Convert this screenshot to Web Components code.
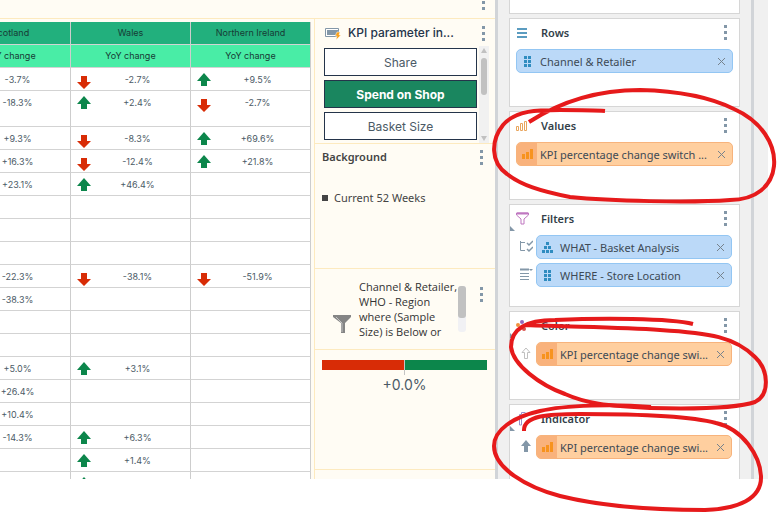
<!DOCTYPE html>
<html lang="en">
<head>
<meta charset="utf-8">
<title>Report editor</title>
<style>
    body {
        margin: 0;
        background: #fff;
        font-family: "Noto Sans", "Open Sans", sans-serif;
        font-size: 11px;
        color: #3d4a55;
    }
</style>
</head>
<body>
<report-editor></report-editor>

<script>
const ICONS = {
    rows: '<svg width="12" height="12"><path d="M1 2h10M1 6h10M1 10h10" stroke="#5b9cc0" stroke-width="2"/></svg>',
    values: '<svg width="12" height="12" fill="none" stroke="#e8a55c"><path d="M.5 6.5h2v4h-2zM4.500 3.500h2v7h-2zM8.500 1.500h2v9h-2z"/></svg>',
    filters: '<svg width="13" height="13" fill="none" stroke="#bf77c0"><path d="M.5 1v2l4.500 4v5h3V7l4.500-4V1z"/><path d="M1 1.500h11" stroke-width="2"/></svg>',
    color: '<svg width="12" height="12"><circle cx="6" cy="2" r="2" fill="#9467bd"/><circle cx="2" cy="5" r="2" fill="#f0913e"/><circle cx="10" cy="4" r="1" fill="#5b9cc0"/><circle cx="8" cy="9" r="2" fill="#d9534f"/></svg>',
    indicator: '<svg width="12" height="15" fill="none" stroke="#9a93cc"><path d="M3.500 14V3.500h2V14zM5.500 3V1.500h4"/></svg>',
    grid: '<svg width="7" height="11" fill="#2f8cc0"><path d="M0 0h3v3H0zM4 0h3v3H4zM0 4h3v3H0zM4 4h3v3H4zM0 8h3v3H0zM4 8h3v3H4z"/></svg>',
    tree: '<svg width="11" height="11" fill="#2f8cc0"><path d="M4 0h3v3H4zM2 4h3v3H2zM6 4h3v3H6zM0 8h3v3H0zM4 8h3v3H4zM8 8h3v3H8z"/></svg>',
    bars: '<svg width="11" height="11" fill="#f7931e"><path d="M0 5h3v5H0zM4 3h3v7H4zM8 0h3v10H8z"/></svg>',
    hierarchy: '<svg width="14" height="13" fill="none" stroke="#8397a8"><path d="M1.500 1v9.500M1.500 2.500H6M1.500 10.500H6"/><path d="M8 3l2 2 4-4M8 9l2 2 4-4" stroke-width="1.500"/></svg>',
    list: '<svg width="14" height="13" fill="none" stroke="#8397a8"><path d="M1 1.500h9" stroke-width="2"/><path d="M1 5.500h9M1 8.500h9M1 11.500h9"/><path d="M10 1h4l-2 2z" fill="#8397a8" stroke="none"/></svg>',
    hollow: '<svg width="10" height="13" fill="#fff" stroke="#c0c0c0"><path d="M5 1L1 5.500h2.500v6h3v-6H9z"/></svg>',
    solid: '<svg width="10" height="13" fill="#8397a8"><path d="M5 0L0 6h3v6h4V6h3z"/></svg>',
    up: '<svg width="14" height="14" fill="#0c864b"><path d="M7 0l7 8h-4v5H4V8H0z"/></svg>',
    down: '<svg width="14" height="14" fill="#d82c06"><path d="M7 13L0 6h4V0h6v6h4z"/></svg>'
};

class DotsMenu extends HTMLElement {
    constructor() {
        super();
        this.attachShadow({ mode: 'open' });
        this.shadowRoot.innerHTML = `
            <style>
                :host { display: block; flex: none; }
                button {
                    display: flex;
                    flex-direction: column;
                    gap: 3px;
                    padding: 0;
                    border: none;
                    background: none;
                    cursor: pointer;
                }
                i {
                    width: 3px;
                    height: 3px;
                    background: #8397a8;
                }
            </style>
            <button aria-label="More options"><i></i><i></i><i></i></button>
        `;
    }
}

customElements.define('dots-menu', DotsMenu);

// [Scotland, Wales, Northern Ireland]
const ROWS = [
    ['-3.7%', '-2.7%', '+9.5%'],
    ['-18.3%', '+2.4%', '-2.7%'],
    ['+9.3%', '-8.3%', '+69.6%'],
    ['+16.3%', '-12.4%', '+21.8%'],
    ['+23.1%', '+46.4%', ''],
    ['', '', ''],
    ['', '', ''],
    ['', '', ''],
    ['-22.3%', '-38.1%', '-51.9%'],
    ['-38.3%', '', ''],
    ['', '', ''],
    ['', '', ''],
    ['+5.0%', '+3.1%', ''],
    ['+26.4%', '', ''],
    ['+10.4%', '', ''],
    ['-14.3%', '+6.3%', ''],
    ['', '+1.4%', ''],
    ['', '+', '']
];

class DataGrid extends HTMLElement {
    constructor() {
        super();
        this.attachShadow({ mode: 'open' });
        const regions = ['Scotland', 'Wales', 'Northern Ireland'];
        this.shadowRoot.innerHTML = `
            <style>
                :host {
                    display: flex;
                    justify-content: flex-end;
                    align-items: flex-start;
                    overflow: hidden;
                    padding: 3px 3px 0 0;
                    font: 9px/12px Inter, "Open Sans", sans-serif;
                }
                table {
                    flex: none;
                    width: 360px;
                    table-layout: fixed;
                    border-spacing: 0;
                    background: #fff;
                }
                th, td {
                    box-sizing: border-box;
                    height: 23px;
                    padding: 0;
                    border-right: 1px solid #cdcdcd;
                    border-bottom: 1px solid #d3d3d3;
                }
                th {
                    font-weight: 400;
                    color: #173b35;
                    background: #22b07d;
                }
                .measure th { background: #49eda6; }
                td { vertical-align: top; }
                tr.tall td { height: 36px; }
                .cell {
                    display: flex;
                    padding: 5px 6px 0 6px;
                    height: 17px;
                }
                .mark { flex: none; width: 14px; }
                .mark.down { padding-top: 3px; }
                svg { display: block; }
                .num {
                    flex: 1;
                    padding-top: 1px;
                    text-align: center;
                    color: #4b5a66;
                }
            </style>
            <table>
                <thead>
                    <tr>${regions.map(r => `<th scope="col">${r}</th>`).join('')}</tr>
                    <tr class="measure">${regions.map(() => '<th scope="col">YoY change</th>').join('')}</tr>
                </thead>
                <tbody>
                    ${ROWS.map((row, i) => `<tr class="${i === 1 ? 'tall' : ''}">${row.map(v => this.cell(v)).join('')}</tr>`).join('')}
                </tbody>
            </table>
        `;
    }

    cell(value) {
        if (!value) return '<td></td>';
        const dir = value[0] === '+' ? 'up' : 'down';
        const text = value.length > 1 ? value : '';
        return `<td><div class="cell"><span class="mark ${dir}">${ICONS[dir]}</span><span class="num">${text}</span></div></td>`;
    }
}

customElements.define('data-grid', DataGrid);

class ParamSlicer extends HTMLElement {
    constructor() {
        super();
        this.attachShadow({ mode: 'open' });
        this.shadowRoot.innerHTML = `
            <style>
                :host {
                    display: block;
                    height: 124px;
                    overflow: hidden;
                }
                header {
                    display: flex;
                    align-items: center;
                    height: 27px;
                    padding: 1px 10px 0 10px;
                    box-sizing: border-box;
                    color: #24344a;
                }
                h2 {
                    flex: 1;
                    margin: 0 0 0 7px;
                    font: 500 12px/16px Inter, sans-serif;
                }
                .body {
                    display: flex;
                    gap: 2px;
                    height: 97px;
                    padding: 0 6px 0 9px;
                }
                .options {
                    flex: 1;
                    display: flex;
                    flex-direction: column;
                    gap: 4px;
                    padding-top: 2px;
                }
                .options button {
                    flex: none;
                    height: 28px;
                    padding: 2px 0 0;
                    border: 1px solid #24344a;
                    background: #fff;
                    color: #4b5a66;
                    font: 12px/16px Inter, sans-serif;
                }
                .options button[aria-pressed="true"] {
                    background: #1a865f;
                    color: #fff;
                    font-weight: 700;
                }
                .track {
                    display: flex;
                    flex-direction: column;
                    align-items: center;
                    width: 10px;
                    background: #f1f1f1;
                }
                .thumb {
                    width: 6px;
                    height: 37px;
                    margin: 4px 0 auto;
                    border-radius: 3px;
                    background: #c1c1c1;
                }
            </style>
            <header>
                <svg width="16" height="13"><path d="M.5 1.500h13v8H.500z" fill="#fff" stroke="#8397a8"/><path d="M2 3h12v5H2z" fill="#8397a8"/><path d="M12 5h3l-1 3h2l-5 5 1-4h-2z" fill="#f9a01b" stroke="#fffcf4" stroke-width=".5"/></svg>
                <h2>KPI parameter in...</h2>
                <dots-menu></dots-menu>
            </header>
            <div class="body">
                <div class="options">
                    <button aria-pressed="false">Share</button>
                    <button aria-pressed="true">Spend on Shop</button>
                    <button aria-pressed="false">Basket Size</button>
                </div>
                <div class="track">
                    <svg width="10" height="8"><path d="M5 2l3 5H2z" fill="#c1c1c1"/></svg>
                    <div class="thumb"></div>
                    <svg width="10" height="8"><path d="M5 6l3-5H2z" fill="#c1c1c1"/></svg>
                </div>
            </div>
        `;
    }
}

customElements.define('param-slicer', ParamSlicer);

class BackgroundLegend extends HTMLElement {
    constructor() {
        super();
        this.attachShadow({ mode: 'open' });
        this.shadowRoot.innerHTML = `
            <style>
                :host { display: block; height: 124px; }
                header {
                    display: flex;
                    justify-content: space-between;
                    align-items: center;
                    height: 27px;
                    padding: 0 12px 0 7px;
                }
                h2 {
                    margin: 0 0 2px;
                    font-size: 11px;
                    line-height: 16px;
                    font-weight: 600;
                    color: #444;
                }
                ul {
                    list-style: none;
                    margin: 0;
                    padding: 19px 0 0 7px;
                }
                li {
                    display: flex;
                    align-items: center;
                    gap: 6px;
                    line-height: 16px;
                    color: #444;
                }
                li::before {
                    content: "";
                    width: 6px;
                    height: 6px;
                    background: #444;
                }
            </style>
            <header><h2>Background</h2><dots-menu></dots-menu></header>
            <ul><li>Current 52 Weeks</li></ul>
        `;
    }
}

customElements.define('background-legend', BackgroundLegend);

class SampleFilter extends HTMLElement {
    constructor() {
        super();
        this.attachShadow({ mode: 'open' });
        this.shadowRoot.innerHTML = `
            <style>
                :host {
                    display: flex;
                    height: 81px;
                    box-sizing: border-box;
                    padding: 10px 12px 0 18px;
                    overflow: hidden;
                }
                svg { flex: none; margin-top: 36px; }
                p {
                    flex: 1;
                    min-width: 0;
                    margin: 0 0 0 7px;
                    font: 11px/15px "Open Sans", sans-serif;
                    white-space: nowrap;
                    color: #333;
                }
                b { font-weight: 500; }
                .track {
                    flex: none;
                    width: 8px;
                    height: 46px;
                    margin: 7px 14px 0 0;
                    border-radius: 3px;
                    background: #f1f1f4;
                }
                .thumb {
                    height: 32px;
                    border-radius: 3px;
                    background: #c1c1c1;
                }
                dots-menu { margin-top: 8px; }
            </style>
            <svg width="19" height="18"><path d="M0 0h18v2l-6 6v10H8V8L0 2z" fill="#858585"/><path d="M3 2l6 6v9" fill="none" stroke="#c4c4c4"/></svg>
            <p><b>Channel &amp; Retailer,</b><br><b>WHO - Region</b><br>where <b>(Sample</b><br><b>Size)</b> is Below or</p>
            <div class="track"><div class="thumb"></div></div>
            <dots-menu></dots-menu>
        `;
    }
}

customElements.define('sample-filter', SampleFilter);

class ChangeGauge extends HTMLElement {
    constructor() {
        super();
        this.attachShadow({ mode: 'open' });
        this.shadowRoot.innerHTML = `
            <style>
                :host {
                    display: block;
                    height: 120px;
                    box-sizing: border-box;
                    padding: 10px 8px 0 7px;
                    text-align: center;
                }
                .bar { display: flex; height: 15px; }
                .bar i { flex: 1; height: 10px; background: #d82c06; }
                .bar i:last-child { background: #0c864b; }
                .bar b { width: 1px; background: #c4c4c4; }
                output {
                    display: block;
                    font: 14px/20px Inter, sans-serif;
                    color: #4b5a66;
                }
            </style>
            <div class="bar"><i></i><b></b><i></i></div>
            <output>+0.0%</output>
        `;
    }
}

customElements.define('change-gauge', ChangeGauge);

class FieldChip extends HTMLElement {
    connectedCallback() {
        const icon = this.getAttribute('icon');
        const side = this.getAttribute('side');
        const measure = icon === 'bars';
        this.attachShadow({ mode: 'open' });
        this.shadowRoot.innerHTML = `
            <style>
                :host { display: flex; }
                :host([side]) { margin-right: 1px; }
                .side {
                    flex: none;
                    display: flex;
                    align-items: center;
                    justify-content: center;
                    width: 20px;
                    height: 22px;
                }
                .chip {
                    flex: 1;
                    display: flex;
                    align-items: center;
                    box-sizing: border-box;
                    min-width: 0;
                    height: 24px;
                    border: 1px solid #93c6f3;
                    border-radius: 5px;
                    overflow: hidden;
                    background: #bbd9f8;
                }
                .icon {
                    flex: none;
                    display: flex;
                    align-items: center;
                    justify-content: center;
                    width: 20px;
                    height: 24px;
                }
                .chip.measure { background: #ffcf9f; border-color: #f7b37c; }
                .measure .icon { background: #f9b27c; }
                .label {
                    flex: 1;
                    min-width: 0;
                    padding-left: 3px;
                    white-space: nowrap;
                }
                button {
                    flex: none;
                    display: flex;
                    padding: 0 6px;
                    border: none;
                    background: none;
                }
            </style>
            ${side ? `<span class="side">${ICONS[side]}</span>` : ''}
            <div class="chip ${measure ? 'measure' : ''}">
                <span class="icon">${ICONS[icon]}</span>
                <span class="label"><slot></slot></span>
                <button aria-label="Remove"><svg width="9" height="9"><path d="M1 1l7 7M8 1l-7 7" stroke="#76828d"/></svg></button>
            </div>
        `;
    }
}

customElements.define('field-chip', FieldChip);

class FieldWell extends HTMLElement {
    connectedCallback() {
        this.attachShadow({ mode: 'open' });
        this.shadowRoot.innerHTML = `
            <style>
                :host {
                    display: block;
                    flex: none;
                    box-sizing: border-box;
                    min-height: 89px;
                    padding: 0 6px 19px;
                    border: 1px solid #d6d6d6;
                    background: #fff;
                    position: relative;
                }
                header {
                    display: flex;
                    align-items: center;
                    height: 27px;
                    margin-bottom: 3px;
                    padding-right: 6px;
                }
                .icon { display: flex; width: 25px; }
                h3 {
                    flex: 1;
                    margin: 0;
                    font-size: 11px;
                    font-weight: 600;
                    line-height: 16px;
                    color: #333f4a;
                }
                .fields {
                    display: flex;
                    flex-direction: column;
                    gap: 4px;
                }
                .corner {
                    position: absolute;
                    left: 0;
                    top: 21px;
                    width: 5px;
                    height: 5px;
                    background: #8397a8;
                    clip-path: polygon(0 0, 0 100%, 100% 100%);
                }
            </style>
            <header>
                <span class="icon">${ICONS[this.getAttribute('icon')]}</span>
                <h3>${this.getAttribute('label')}</h3>
                <dots-menu></dots-menu>
            </header>
            ${this.hasAttribute('nested') ? '<div class="corner"></div>' : ''}
            <div class="fields"><slot></slot></div>
        `;
    }
}

customElements.define('field-well', FieldWell);

class InkMarkup extends HTMLElement {
    constructor() {
        super();
        this.attachShadow({ mode: 'open' });
        this.shadowRoot.innerHTML = `
            <style>
                :host {
                    position: absolute;
                    left: 0;
                    top: 0;
                    pointer-events: none;
                }
                svg { display: block; }
            </style>
            <svg width="778" height="512" fill="none" stroke="#e61a1b" stroke-width="4" stroke-linejoin="round">
                <path d="M529 122C560 102 596 90 640 90C680 91 712 98 734 109C761 121 776 144 774 166C772 186 756 200 730 200C690 203 610 201 570 197C540 191 521 185 507 174C490 162 491 140 503 125C516 110 538 110 560 110C580 110 593 110 605 111"/>
                <path d="M693 324C670 318 600 318 555 320C527 320 511 328 511 347C513 365 540 385 565 394C585 403 606 406 650 408C690 409 735 409 755 402C770 395 769 370 755 357C735 337 710 333 660 330C620 327 570 327 526 325"/>
                <path d="M651 407C615 404 565 405 540 411C513 417 494 430 494 446C494 468 526 487 560 496C600 506 655 510 705 510C738 509 762 499 761 476C760 456 743 429 716 423C690 416 630 414 580 414C550 414 523 415 524 431"/>
            </svg>
        `;
    }
}

customElements.define('ink-markup', InkMarkup);

class ReportEditor extends HTMLElement {
    constructor() {
        super();
        this.attachShadow({ mode: 'open' });
        this.shadowRoot.innerHTML = `
            <style>
                :host {
                    display: block;
                    position: relative;
                    height: 100vh;
                    min-height: 320px;
                    overflow: hidden;
                }
                .app {
                    display: flex;
                    height: calc(100% - 33px);
                    padding-right: 10px;
                    overflow: hidden;
                }
                .report {
                    flex: 1;
                    display: flex;
                    flex-direction: column;
                    min-width: 0;
                    background: #fffcf4;
                }
                .top {
                    flex: none;
                    display: flex;
                    justify-content: flex-end;
                    align-items: flex-end;
                    box-sizing: border-box;
                    height: 19px;
                    padding: 0 10px 8px 0;
                    overflow: hidden;
                    border-bottom: 1px solid #fdeabf;
                }
                .canvas {
                    flex: 1;
                    display: flex;
                    min-height: 0;
                }
                data-grid { flex: 1; min-width: 0; }
                .widgets {
                    flex: none;
                    width: 180px;
                    border-left: 1px solid #fdeabf;
                }
                .widgets > * { border-bottom: 1px solid #fdeabf; }
                .wells {
                    flex: none;
                    display: flex;
                    flex-direction: column;
                    gap: 4px;
                    box-sizing: border-box;
                    width: 259px;
                    padding: 0 11px;
                    overflow: hidden;
                    border: solid #d1d4d8;
                    border-width: 0 3px;
                    background: #f0f0f0;
                }
                .above {
                    flex: none;
                    height: 14px;
                    border: 1px solid #d6d6d6;
                    border-top: none;
                    background: #fff;
                    box-sizing: border-box;
                }
                .gutter { flex: none; width: 14px; background: #f0f0f0; }
            </style>
            <div class="app">
                <main class="report">
                    <div class="top"><dots-menu></dots-menu></div>
                    <div class="canvas">
                        <data-grid></data-grid>
                        <div class="widgets">
                            <param-slicer></param-slicer>
                            <background-legend></background-legend>
                            <sample-filter></sample-filter>
                            <change-gauge></change-gauge>
                        </div>
                    </div>
                </main>
                <aside class="wells">
                    <div class="above"></div>
                    <field-well label="Rows" icon="rows">
                        <field-chip icon="grid">Channel &amp; Retailer</field-chip>
                    </field-well>
                    <field-well label="Values" icon="values">
                        <field-chip icon="bars">KPI percentage change switch ...</field-chip>
                    </field-well>
                    <field-well label="Filters" icon="filters" nested>
                        <field-chip icon="tree" side="hierarchy">WHAT - Basket Analysis</field-chip>
                        <field-chip icon="grid" side="list">WHERE - Store Location</field-chip>
                    </field-well>
                    <field-well label="Color" icon="color" nested>
                        <field-chip icon="bars" side="hollow">KPI percentage change swi...</field-chip>
                    </field-well>
                    <field-well label="Indicator" icon="indicator" nested>
                        <field-chip icon="bars" side="solid">KPI percentage change swi...</field-chip>
                    </field-well>
                </aside>
                <div class="gutter"></div>
            </div>
            <ink-markup></ink-markup>
        `;
    }
}

customElements.define('report-editor', ReportEditor);
</script>
</body>
</html>
